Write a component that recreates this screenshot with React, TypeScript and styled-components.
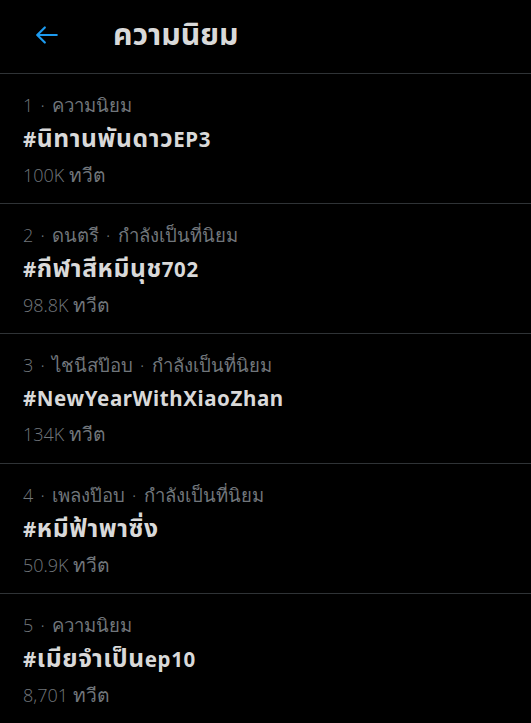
import React from "react";
import styled, { createGlobalStyle } from "styled-components";

const Global = createGlobalStyle`
  html, body { margin: 0; padding: 0; background: #000; }
  body { font-family: "Noto Sans", "Noto Sans Thai", sans-serif; }
`;

const Page = styled.div`
  width: 531px;
  min-height: 723px;
  background: #000;
  color: #d9d9d9;
`;

const Header = styled.header`
  height: 74px;
  display: flex;
  align-items: center;
  border-bottom: 1px solid #2f3336;
  box-sizing: border-box;
  padding-left: 33px;
`;

const BackButton = styled.button`
  width: 28px;
  height: 28px;
  padding: 0;
  background: none;
  border: none;
  display: flex;
  align-items: center;
  justify-content: center;
  color: #1d9bf0;
  margin-right: 52px;
  margin-top: -4px;
`;

const Title = styled.h1`
  margin: 0;
  font-size: 25.2px;
  font-weight: 700;
  color: #d9d9d9;
  margin-top: -1px;
`;

const Thai = styled.span<{ $scale: number }>`
  font-size: ${(p) => p.$scale}em;
`;

const Row = styled.div`
  height: 130px;
  box-sizing: border-box;
  border-bottom: 1px solid #2f3336;
  padding: 18px 23px 0;
  display: flex;
  flex-direction: column;
`;

const Meta = styled.div`
  font-family: "Open Sans", "Noto Sans", sans-serif;
  font-size: 18px;
  font-weight: 300;
  color: #71767b;
  line-height: 26px;
  word-spacing: 2.5px;
  white-space: nowrap;
`;

const Tag = styled.div`
  font-size: 20.5px;
  font-weight: 700;
  color: #d9d9d9;
  line-height: 30px;
  letter-spacing: 0.6px;
  margin-top: 5px;
`;

const Count = styled.div`
  font-family: "Open Sans", "Noto Sans", sans-serif;
  font-size: 18px;
  font-weight: 300;
  color: #71767b;
  line-height: 26px;
  margin-top: 8px;
`;

function Mixed({ text, scale }: { text: string; scale: number }) {
  const parts = text.split(/([\u0E00-\u0E7F]+)/);
  return (
    <>
      {parts.map((p, i) =>
        /[\u0E00-\u0E7F]/.test(p) ? (
          <Thai key={i} $scale={scale}>
            {p}
          </Thai>
        ) : (
          <React.Fragment key={i}>{p}</React.Fragment>
        )
      )}
    </>
  );
}

const trends = [
  { meta: "1 · ความนิยม", tag: "#นิทานพันดาวEP3", count: "100K ทวีต" },
  { meta: "2 · ดนตรี · กำลังเป็นที่นิยม", tag: "#กีฬาสีหมีนุช702", count: "98.8K ทวีต" },
  { meta: "3 · ไชนีสป๊อบ · กำลังเป็นที่นิยม", tag: "#NewYearWithXiaoZhan", count: "134K ทวีต" },
  { meta: "4 · เพลงป๊อบ · กำลังเป็นที่นิยม", tag: "#หมีฟ้าพาซิ่ง", count: "50.9K ทวีต" },
  { meta: "5 · ความนิยม", tag: "#เมียจำเป็นep10", count: "8,701 ทวีต" },
];

export default function App() {
  return (
    <Page>
      <Global />
      <Header>
        <BackButton aria-label="back">
          <svg width="26" height="26" viewBox="0 0 24 24" fill="none" stroke="currentColor" strokeWidth="2" strokeLinecap="round" strokeLinejoin="round">
            <path d="M21 12H3.5" />
            <path d="M10 5l-7 7 7 7" />
          </svg>
        </BackButton>
        <Title>
          <Mixed text="ความนิยม" scale={1.2} />
        </Title>
      </Header>
      {trends.map((t) => (
        <Row key={t.tag}>
          <Meta>
            <Mixed text={t.meta} scale={1.03} />
          </Meta>
          <Tag>
            <Mixed text={t.tag} scale={1.2} />
          </Tag>
          <Count>
            <Mixed text={t.count} scale={1.07} />
          </Count>
        </Row>
      ))}
    </Page>
  );
}
